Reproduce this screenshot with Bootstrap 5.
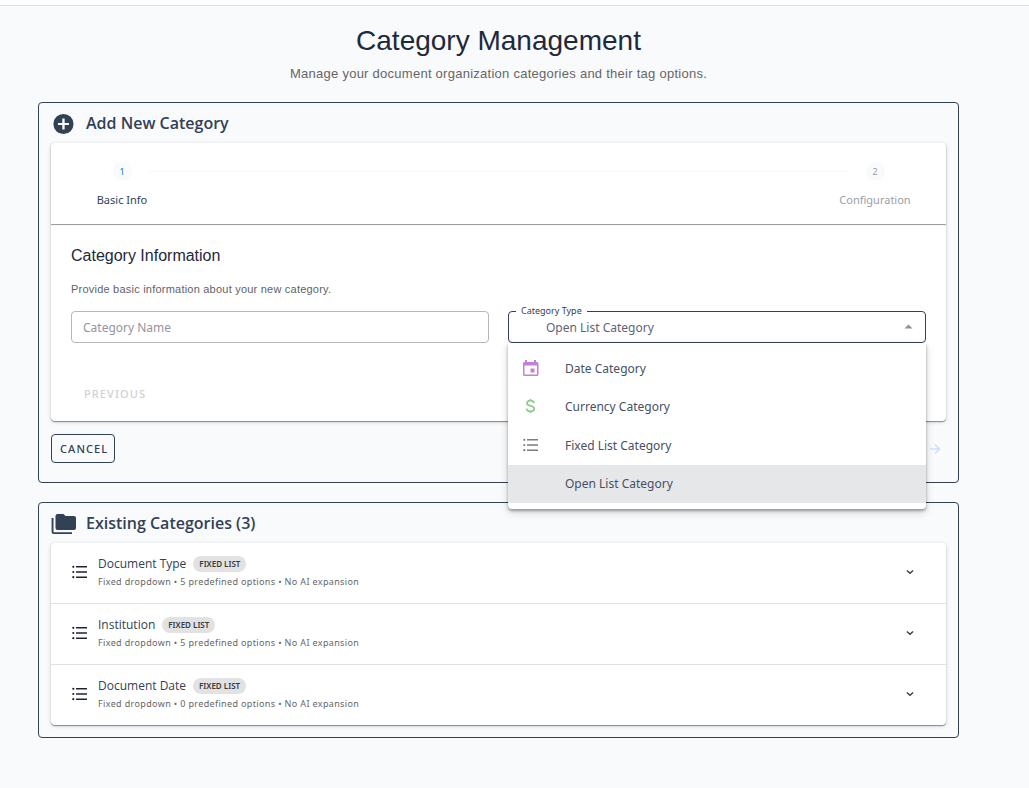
<!DOCTYPE html>
<html lang="en">
<head>
<meta charset="utf-8">
<meta name="viewport" content="width=device-width, initial-scale=1">
<title>Category Management</title>
<link rel="stylesheet" href="https://cdn.jsdelivr.net/npm/bootstrap@5.3.0/dist/css/bootstrap.min.css">
<style>
  :root { --ink: #334155; --muted-ink: #5f6368; --arial: "Liberation Sans", Arial, sans-serif; }
  body { background: #f9fafc; color: var(--ink); font-family: "Noto Sans", "Segoe UI", sans-serif; font-size: 12px; line-height: 20px; }
  .topbar { height: 6px; border-bottom: 1px solid #e0e0e0; }
  main { padding: 17px 70px 48px 38px; }
  .page-title { font: 28px/36px var(--arial); color: #1e293b; margin-bottom: 6px; }
  .page-lead { font: 13px/18px var(--arial); letter-spacing: .02em; color: #666; margin-bottom: 19px; }

  .panel { border: 1px solid var(--ink); border-radius: 4px; padding: 0 12px; }
  .panel-head { height: 40px; gap: 9px; padding-bottom: 1px; }
  .panel-head h2 { font: 600 16px/24px "Open Sans", "Segoe UI", sans-serif; }
  .head-icon { width: 26px; padding-top: 3px; }
  .panel-add { padding-bottom: 19px; margin-bottom: 19px; }
  .panel-list { padding-bottom: 12px; }

  .sheet { background: #fff; border-radius: 4px; box-shadow: 0 1px 1px rgba(0,0,0,.4), 0 1px 4px rgba(0,0,0,.16); }
  .stepper { border-radius: 4px 4px 0 0; height: 81px; padding: 19px 23px 0; box-shadow: 0 1px 1px rgba(0,0,0,.42); }
  .step { width: 96px; font-size: 11px; line-height: 18px; }
  .step-dot { width: 19px; height: 19px; border-radius: 50%; background: #f8fafc; font-size: 9px; line-height: 19px; margin-bottom: 10px; }
  .step-active .step-dot { color: #1976d2; }
  .step-idle { color: #9a9ea6; }
  .step-line { height: 1px; background: #f8f9fb; margin: 9px -22px 0; }

  .form-body { padding: 20px 20px 12px; }
  .form-body h3 { font: 16px/24px var(--arial); color: #1e293b; margin-bottom: 13px; }
  .form-body p { font: 11px/16px var(--arial); letter-spacing: .02em; color: var(--muted-ink); margin-bottom: 14px; }
  .fields { display: grid; grid-template-columns: 1fr 1fr; gap: 19px; margin-bottom: 36px; }
  .field { height: 32px; border: 1px solid #b4b7bc; border-radius: 4px; padding: 0 11px; font-size: 12px; line-height: 20px; background-color: #fff; box-shadow: none; }
  .field::placeholder { color: #9296a0; opacity: 1; }
  .field-open { border-color: var(--ink); color: #5d6575; padding: 1px 30px 0 37px; background-image: none; }
  .field-label { left: 8px; top: -7px; padding: 0 5px; background: #fff; font-size: 9px; line-height: 14px; }
  .caret { right: 13px; top: 13px; }

  .options { top: 32px; left: 0; right: 0; z-index: 10; background: #fff; border-radius: 0 0 4px 4px; padding: 7px 0 6px; box-shadow: 0 2px 3px rgba(0,0,0,.32), 0 3px 9px rgba(0,0,0,.16); }
  .option { height: 38px; padding: 0 14px; gap: 26px; border: 0; background: none; color: #475063; width: 100%; text-align: left; }
  .option + .option:nth-child(odd) { margin-top: 1px; }
  .option[aria-selected="true"] { background: #e6e7e9; }
  .option-icon { width: 17px; height: 18px; }
  .icon-grey { color: #7d7d80; }

  .caps { font-weight: 500; font-size: 11px; line-height: 18px; letter-spacing: .1em; background: none; }
  .prev { color: #d0d1d4; border: 0; padding: 6px 13px; }
  .cancel { border: 1px solid var(--ink); border-radius: 4px; color: var(--ink); padding: 5px 6px 4px 8px; }
  .panel-actions { padding-top: 13px; }
  .next { border: 0; background: none; padding: 4px 5px; color: #cfe0fb; }

  .cat-row { width: 100%; border: 0; background: none; color: var(--ink); gap: 10px; padding: 11px 31px 13px 20px; min-height: 60px; }
  .cat + .cat { border-top: 1px solid #e0e0e0; }
  .cat-title { gap: 7px; }
  .cat-name { font: 500 12px/20px "Open Sans", "Segoe UI", sans-serif; }
  .cat-note { font-size: 9px; line-height: 16px; letter-spacing: .04em; color: #666; }
  .chip { background: #e2e2e2; color: #3b3b3b; border-radius: 8px; padding: 0 6px; font-weight: 600; font-size: 8px; line-height: 16px; }
</style>
</head>
<body>
<svg class="d-none">
  <symbol id="i-list" viewBox="0 0 17 14">
    <path fill="currentColor" d="M5 1h11v1.500H5zM5 6.200h11v1.500H5zM5 11.400h11v1.500H5z"/>
    <circle fill="currentColor" cx="2.300" cy="1.800" r="1.100"/><circle fill="currentColor" cx="2.300" cy="7" r="1.100"/><circle fill="currentColor" cx="2.300" cy="12.200" r="1.100"/>
  </symbol>
  <symbol id="i-chevron" viewBox="0 0 10 10"><path fill="none" stroke="currentColor" stroke-width="1.400" d="M1.900 3.400 5 6.200l3.100-2.800"/></symbol>
</svg>

<header class="topbar bg-white"></header>
<main>
  <div class="text-center">
    <h1 class="page-title">Category Management</h1>
    <p class="page-lead">Manage your document organization categories and their tag options.</p>
  </div>

  <section class="panel panel-add">
    <div class="panel-head d-flex align-items-center">
      <span class="head-icon d-flex"><svg width="24" height="22" viewBox="0 0 24 24" fill="#334155"><path d="M12.500 1a11 11 0 1 0 0 22 11 11 0 0 0 0-22zm6 12.200h-4.700v4.700h-2.600v-4.700H6.500v-2.400h4.700V6.100h2.600v4.700h4.700z"/></svg></span>
      <h2 class="m-0">Add New Category</h2>
    </div>
    <div class="sheet">
      <div class="stepper d-flex">
        <div class="step step-active text-center"><div class="step-dot mx-auto">1</div>Basic Info</div>
        <div class="step-line flex-grow-1"></div>
        <div class="step step-idle text-center"><div class="step-dot mx-auto">2</div>Configuration</div>
      </div>
      <div class="form-body">
        <h3>Category Information</h3>
        <p>Provide basic information about your new category.</p>
        <div class="fields">
          <input class="form-control field" type="text" placeholder="Category Name" aria-label="Category Name">
          <div class="position-relative">
            <select class="form-select field field-open" id="type">
              <option>Date Category</option><option>Currency Category</option><option>Fixed List Category</option><option selected>Open List Category</option>
            </select>
            <label class="field-label position-absolute" for="type">Category Type</label>
            <svg class="caret position-absolute" width="9" height="5" viewBox="0 0 9 5"><path fill="#8a8f99" d="M.500 4.500 4.500.500l4 4z"/></svg>
            <div class="options position-absolute" role="listbox" aria-label="Category Type">
              <button type="button" class="option d-flex align-items-center" role="option" aria-selected="false">
                <svg class="option-icon" viewBox="0 0 17 18" fill="#c67fd6"><path fill-rule="evenodd" d="M3 0h2v2h7V0h2v2h1a1.500 1.500 0 0 1 1.500 1.500v11A1.500 1.500 0 0 1 15 16H2.500A1.500 1.500 0 0 1 1 14.500v-11A1.500 1.500 0 0 1 2.500 2H3zM2.500 5.500v9H15v-9z"/><path d="M8.500 8.500h4v4h-4z"/></svg>Date Category</button>
              <button type="button" class="option d-flex align-items-center" role="option" aria-selected="false">
                <svg class="option-icon" viewBox="0 0 17 18" fill="none" stroke="#8fcd93" stroke-width="1.800"><path d="M12 5.200C11.800 3.500 10.400 2.700 8.500 2.700 6.500 2.700 5 3.700 5 5.300c0 3.600 7.200 1.700 7.200 5.400 0 1.600-1.600 2.600-3.700 2.600s-3.700-.9-3.900-2.700M8.500 1v1.700M8.500 13.300V15"/></svg>Currency Category</button>
              <button type="button" class="option d-flex align-items-center" role="option" aria-selected="false">
                <svg class="option-icon icon-grey"><use href="#i-list" y="1" width="17" height="14"/></svg>Fixed List Category</button>
              <button type="button" class="option d-flex align-items-center" role="option" aria-selected="true"><span class="option-icon"></span>Open List Category</button>
            </div>
          </div>
        </div>
        <button type="button" class="caps prev" disabled>PREVIOUS</button>
      </div>
    </div>
    <div class="panel-actions d-flex justify-content-between align-items-center">
      <button type="button" class="caps cancel">CANCEL</button>
      <button type="button" class="next" aria-label="Next" disabled><svg class="d-block" width="12" height="12" viewBox="0 0 12 12" fill="none" stroke="currentColor" stroke-width="1.500"><path d="M1 6h9M6 1.500 10.500 6 6 10.500"/></svg></button>
    </div>
  </section>

  <section class="panel panel-list">
    <div class="panel-head d-flex align-items-center">
      <span class="head-icon d-flex"><svg width="26" height="22" viewBox="0 0 26 22" fill="#334155"><path d="M6.500 1h6l2 2h8.500a2 2 0 0 1 2 2v10a2 2 0 0 1-2 2H6.500a2 2 0 0 1-2-2V3a2 2 0 0 1 2-2z"/><path d="M.600 5h1.900v14.200H21V21H2.600a2 2 0 0 1-2-2z"/></svg></span>
      <h2 class="m-0">Existing Categories (3)</h2>
    </div>
    <ul class="sheet list-unstyled m-0">
      <li class="cat"><button type="button" class="cat-row d-flex align-items-center text-start">
        <svg width="17" height="14" color="#1f2430"><use href="#i-list"/></svg>
        <span class="d-block flex-grow-1"><span class="cat-title d-flex align-items-center"><span class="cat-name">Document Type</span><span class="chip">FIXED LIST</span></span><span class="cat-note d-block">Fixed dropdown • 5 predefined options • No AI expansion</span></span>
        <svg width="10" height="10"><use href="#i-chevron"/></svg></button></li>
      <li class="cat"><button type="button" class="cat-row d-flex align-items-center text-start">
        <svg width="17" height="14" color="#1f2430"><use href="#i-list"/></svg>
        <span class="d-block flex-grow-1"><span class="cat-title d-flex align-items-center"><span class="cat-name">Institution</span><span class="chip">FIXED LIST</span></span><span class="cat-note d-block">Fixed dropdown • 5 predefined options • No AI expansion</span></span>
        <svg width="10" height="10"><use href="#i-chevron"/></svg></button></li>
      <li class="cat"><button type="button" class="cat-row d-flex align-items-center text-start">
        <svg width="17" height="14" color="#1f2430"><use href="#i-list"/></svg>
        <span class="d-block flex-grow-1"><span class="cat-title d-flex align-items-center"><span class="cat-name">Document Date</span><span class="chip">FIXED LIST</span></span><span class="cat-note d-block">Fixed dropdown • 0 predefined options • No AI expansion</span></span>
        <svg width="10" height="10"><use href="#i-chevron"/></svg></button></li>
    </ul>
  </section>
</main>
<script src="https://cdn.jsdelivr.net/npm/bootstrap@5.3.0/dist/js/bootstrap.bundle.min.js"></script>
</body>
</html>
